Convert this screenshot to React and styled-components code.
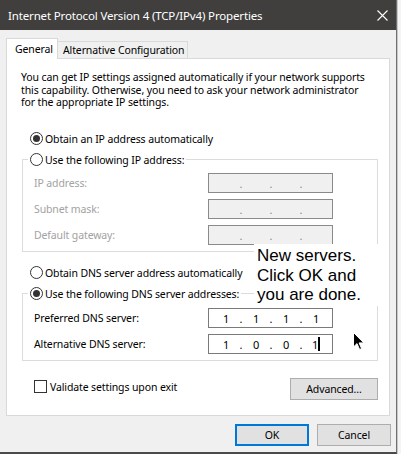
import React from "react";
import styled, { createGlobalStyle } from "styled-components";

const GlobalStyle = createGlobalStyle`
  html, body {
    margin: 0;
    padding: 0;
  }
  body {
    background: #e6e6e6;
    font-family: "Noto Sans", "Liberation Sans", sans-serif;
    font-size: 10.5px;
    letter-spacing: -0.12px;
    color: #000;
  }
`;

const Screen = styled.div`
  position: relative;
  display: flex;
  width: 401px;
  height: 454px;
  overflow: hidden;
`;

const Dialog = styled.div`
  width: 397px;
  height: 454px;
  box-sizing: border-box;
  display: flex;
  flex-direction: column;
  background: #f0f0f0;
  border-right: 1px solid #707070;
  border-bottom: 2px solid #4a4a4a;
`;

const Backdrop = styled.div`
  flex: 1;
  background: #f4f4f4;
  border-left: 1px solid #c8c8c8;
`;

const TitleBar = styled.div`
  height: 30px;
  flex: none;
  display: flex;
  align-items: center;
  justify-content: space-between;
  padding: 0 8px 0 8px;
  background: #403f3d;
  color: #fff;
  font-size: 11.5px;
  letter-spacing: -0.15px;
`;

const Body = styled.div`
  display: flex;
  flex-direction: column;
  padding: 7px 5px 0 6px;
`;

const TabRow = styled.div`
  display: flex;
  align-items: flex-end;
  height: 21px;
  position: relative;
  z-index: 1;
`;

const Tab = styled.div`
  box-sizing: border-box;
  width: ${(p) => p.$w}px;
  height: ${(p) => (p.$active ? 21 : 17)}px;
  margin-bottom: ${(p) => (p.$active ? -1 : 0)}px;
  padding-left: ${(p) => (p.$active ? 8 : 5)}px;
  display: flex;
  align-items: center;
  background: ${(p) => (p.$active ? "#fff" : "#f0f0f0")};
  border: 1px solid #d9d9d9;
  border-bottom: none;
  border-left: ${(p) => (p.$active ? "1px solid #d9d9d9" : "none")};
  white-space: nowrap;
`;

const Panel = styled.div`
  box-sizing: border-box;
  width: 384px;
  height: 358px;
  background: #fff;
  border: 1px solid #d9d9d9;
  padding: 0 11px 0 15px;
  display: flex;
  flex-direction: column;
`;

const Intro = styled.p`
  margin: 12px 0 0 -1px;
  line-height: 12.7px;
  white-space: nowrap;
`;

const Choice = styled.label`
  display: flex;
  align-items: center;
  gap: 2px;
  height: 15px;
  margin-top: ${(p) => p.$top || 0}px;
  margin-left: ${(p) => (p.$legend ? 0 : 8)}px;
  white-space: nowrap;
`;

const Radio = styled.span`
  box-sizing: border-box;
  width: 13px;
  height: 13px;
  flex: none;
  border-radius: 50%;
  border: 1px solid #333;
  background: #fff;
  display: flex;
  align-items: center;
  justify-content: center;
  &::after {
    content: "";
    width: 7px;
    height: 7px;
    border-radius: 50%;
    background: ${(p) => (p.$on ? "#333" : "transparent")};
  }
`;

const Group = styled.fieldset`
  margin: 6px 0 0 0;
  padding: ${(p) => p.$pt}px 43px 6px 11px;
  border: 1px solid #dcdcdc;
  display: flex;
  flex-direction: column;
  gap: 6px;
`;

const Legend = styled.legend`
  padding: 0 2px;
  margin-left: -6px;
`;

const FieldRow = styled.div`
  display: grid;
  grid-template-columns: 174px 125px;
  align-items: center;
  height: 20px;
`;

const FieldLabel = styled.span`
  color: ${(p) => (p.$off ? "#a2a2a2" : "#000")};
  white-space: nowrap;
`;

const IpBox = styled.div`
  box-sizing: border-box;
  height: 20px;
  display: flex;
  align-items: center;
  padding-left: 6px;
  background: ${(p) => (p.$off ? "#f0f0f0" : "#fff")};
  border: 1px solid ${(p) => (p.$off ? "#8a8a8a" : "#7a7a7a")};
  color: ${(p) => (p.$off ? "#8c8c8c" : "#000")};
  font-size: 11px;
`;

const Octet = styled.span`
  width: 22px;
  display: flex;
  justify-content: center;
  align-items: center;
`;

const Dot = styled.span`
  width: 8px;
  text-align: center;
`;

const Caret = styled.span`
  display: inline-block;
  width: 2px;
  height: 14px;
  background: #000;
`;

const FootRow = styled.div`
  display: flex;
  justify-content: space-between;
  align-items: flex-start;
  margin-top: 17px;
`;

const CheckLine = styled.label`
  display: flex;
  align-items: center;
  gap: 3px;
  height: 15px;
  margin: 1px 0 0 12px;
`;

const Box = styled.span`
  box-sizing: border-box;
  width: 13px;
  height: 13px;
  border: 1px solid #333;
  background: #fff;
`;

const Button = styled.div`
  box-sizing: border-box;
  width: ${(p) => p.$w}px;
  height: 22px;
  display: flex;
  align-items: center;
  justify-content: center;
  background: #e1e1e1;
  border: ${(p) => (p.$default ? "2px solid #0078d7" : "1px solid #adadad")};
`;

const ButtonRow = styled.div`
  display: flex;
  justify-content: flex-end;
  gap: 8px;
  margin-top: 8px;
`;

const Note = styled.div`
  position: absolute;
  left: 254px;
  top: 244px;
  width: 126px;
  box-sizing: border-box;
  padding: 2px 0 1px 3px;
  background: #fff;
  font-family: "Liberation Sans", Arial, sans-serif;
  font-size: 17px;
  line-height: 19.5px;
  letter-spacing: normal;
  color: #000;
`;

const Pointer = styled.svg`
  position: absolute;
  left: 353px;
  top: 332px;
`;

const IpValue = ({ parts, off, caret }) => (
  <IpBox $off={off}>
    {parts.map((p, i) => (
      <React.Fragment key={i}>
        {i > 0 && <Dot>.</Dot>}
        <Octet>
          {p}
          {caret && i === 3 && <Caret />}
        </Octet>
      </React.Fragment>
    ))}
  </IpBox>
);

const blank = ["", "", "", ""];

export default function App() {
  return (
    <Screen>
      <GlobalStyle />
      <Dialog>
        <TitleBar>
          <span>Internet Protocol Version 4 (TCP/IPv4) Properties</span>
          <svg width="11" height="11" viewBox="0 0 11 11">
            <path d="M0.5 0.5 L10.5 10.5 M10.5 0.5 L0.5 10.5" stroke="#fff" strokeWidth="1.1" />
          </svg>
        </TitleBar>
        <Body>
          <TabRow>
            <Tab $active $w={52}>General</Tab>
            <Tab $w={130}>Alternative Configuration</Tab>
          </TabRow>
          <Panel>
            <Intro>
              You can get IP settings assigned automatically if your network supports
              <br />
              this capability. Otherwise, you need to ask your network administrator
              <br />
              for the appropriate IP settings.
            </Intro>

            <Choice $top={22}>
              <Radio $on />
              Obtain an IP address automatically
            </Choice>
            <Group $pt={6}>
              <Legend>
                <Choice $legend>
                  <Radio />
                  Use the following IP address:
                </Choice>
              </Legend>
              <FieldRow>
                <FieldLabel $off>IP address:</FieldLabel>
                <IpValue parts={blank} off />
              </FieldRow>
              <FieldRow>
                <FieldLabel $off>Subnet mask:</FieldLabel>
                <IpValue parts={blank} off />
              </FieldRow>
              <FieldRow>
                <FieldLabel $off>Default gateway:</FieldLabel>
                <IpValue parts={blank} off />
              </FieldRow>
            </Group>

            <Choice $top={13}>
              <Radio />
              Obtain DNS server address automatically
            </Choice>
            <Group $pt={7}>
              <Legend>
                <Choice $legend>
                  <Radio $on />
                  Use the following DNS server addresses:
                </Choice>
              </Legend>
              <FieldRow>
                <FieldLabel>Preferred DNS server:</FieldLabel>
                <IpValue parts={["1", "1", "1", "1"]} />
              </FieldRow>
              <FieldRow>
                <FieldLabel>Alternative DNS server:</FieldLabel>
                <IpValue parts={["1", "0", "0", "1"]} caret />
              </FieldRow>
            </Group>

            <FootRow>
              <CheckLine>
                <Box />
                Validate settings upon exit
              </CheckLine>
              <Button $w={88}>Advanced...</Button>
            </FootRow>
          </Panel>
          <ButtonRow>
            <Button $w={74} $default>OK</Button>
            <Button $w={74}>Cancel</Button>
          </ButtonRow>
        </Body>
      </Dialog>
      <Backdrop />

      <Note>
        New servers.
        <br />
        Click OK and
        <br />
        you are done.
      </Note>
      <Pointer width="12" height="19" viewBox="0 0 12 19">
        <path d="M0.5 0.5 L0.5 15 L4 11.6 L6.6 17.5 L8.6 16.6 L6.1 10.9 L10.8 10.9 Z" fill="#000" stroke="#fff" strokeWidth="1" />
      </Pointer>
    </Screen>
  );
}
